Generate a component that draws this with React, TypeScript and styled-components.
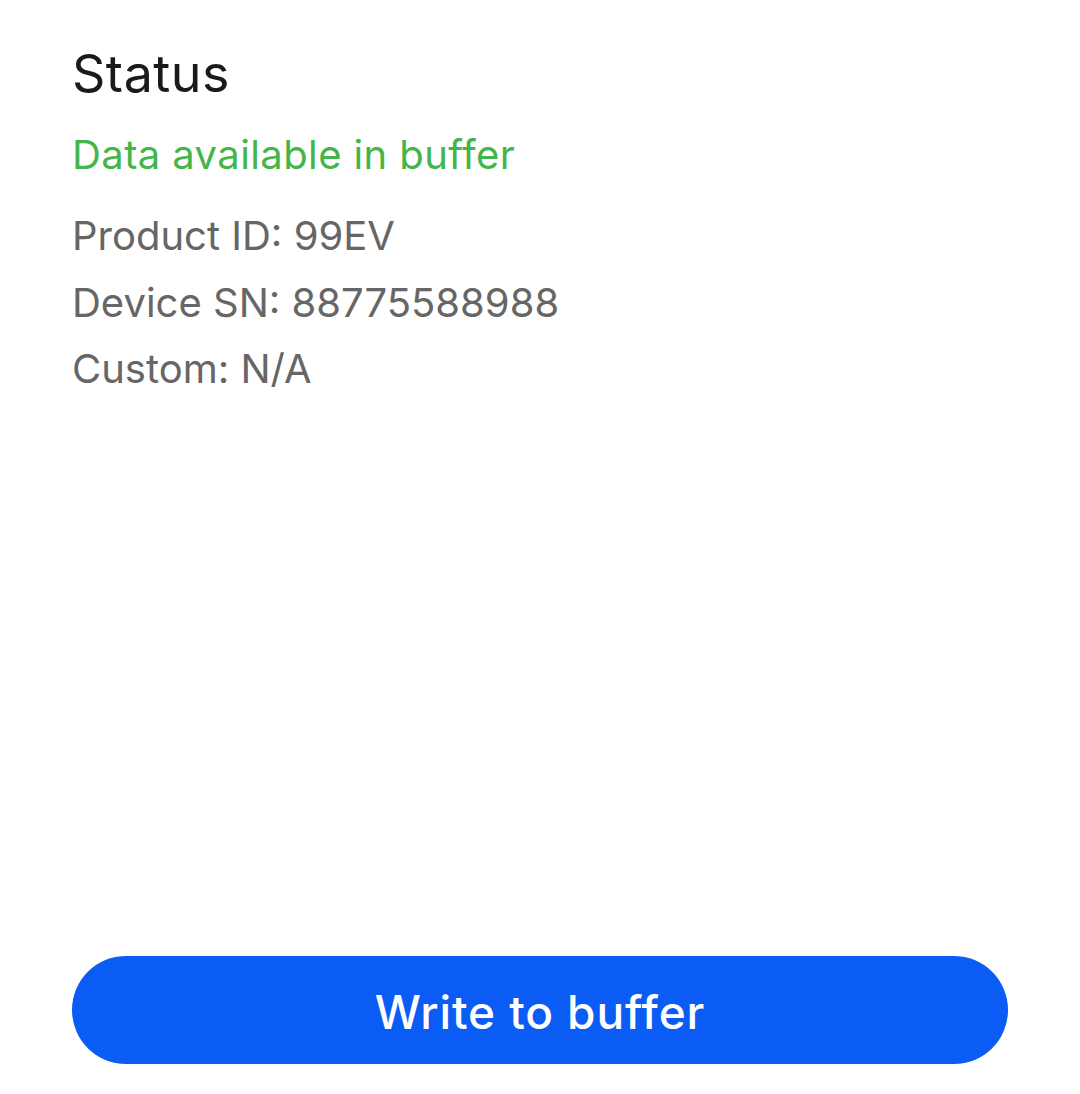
import React from "react";
import styled, { createGlobalStyle } from "styled-components";

const Global = createGlobalStyle`
  html, body { margin: 0; padding: 0; background: #ffffff; }
  body { font-family: Inter, "Noto Sans", sans-serif; }
`;

const Page = styled.div`
  box-sizing: border-box;
  min-height: 1094px;
  display: flex;
  flex-direction: column;
  padding: 42px 72px 30px 72px;
`;

const Title = styled.h1`
  margin: 0;
  font-size: 52px;
  line-height: 64px;
  font-weight: 400;
  letter-spacing: 0.5px;
  color: #1a1a1a;
`;

const StatusText = styled.div`
  margin-top: 21px;
  font-size: 40px;
  line-height: 56px;
  letter-spacing: 0.4px;
  color: #43b549;
`;

const InfoList = styled.div`
  margin-top: 20px;
  display: flex;
  flex-direction: column;
`;

const InfoRow = styled.div`
  font-size: 40px;
  line-height: 66.5px;
  color: #666666;
`;

const Spacer = styled.div`
  flex: 1;
`;

const PrimaryButton = styled.button`
  height: 108px;
  width: 100%;
  border: none;
  border-radius: 54px;
  background: #0b5cf5;
  color: #ffffff;
  font-family: Inter, "Noto Sans", sans-serif;
  font-size: 46px;
  font-weight: 500;
  letter-spacing: 0.9px;
  padding-top: 4px;
  cursor: pointer;
`;

export default function App() {
  const rows = ["Product ID: 99EV", "Device SN: 88775588988", "Custom: N/A"];
  return (
    <>
      <Global />
      <Page>
        <Title>Status</Title>
        <StatusText>Data available in buffer</StatusText>
        <InfoList>
          {rows.map((r) => (
            <InfoRow key={r}>{r}</InfoRow>
          ))}
        </InfoList>
        <Spacer />
        <PrimaryButton>Write to buffer</PrimaryButton>
      </Page>
    </>
  );
}
